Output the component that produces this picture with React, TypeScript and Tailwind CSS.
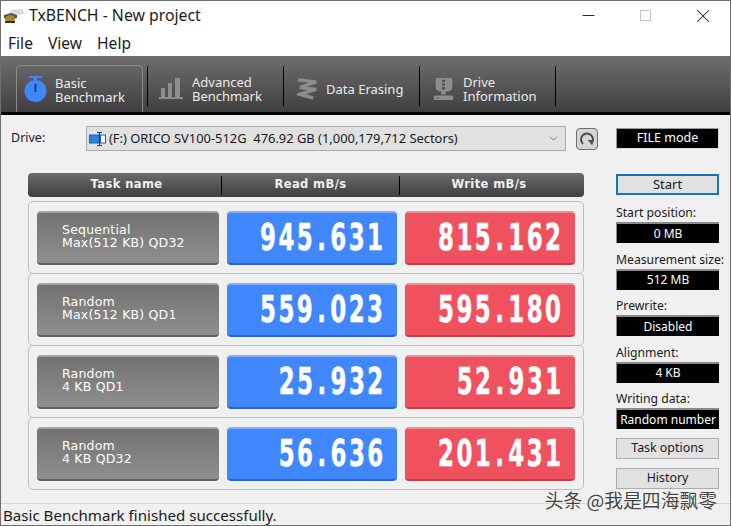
import { ChevronDown, Minus, X } from "lucide-react";

const uiFont = "font-['Noto_Sans','Open_Sans',sans-serif]";
const cellFont = "font-['DejaVu_Sans',sans-serif]";

type ResultRow = {
  line1: string;
  line2: string;
  read: string;
  write: string;
};

const results: ResultRow[] = [
  { line1: "Sequential", line2: "Max(512 KB) QD32", read: "945.631", write: "815.162" },
  { line1: "Random", line2: "Max(512 KB) QD1", read: "559.023", write: "595.180" },
  { line1: "Random", line2: "4 KB QD1", read: "25.932", write: "52.931" },
  { line1: "Random", line2: "4 KB QD32", read: "56.636", write: "201.431" },
];

const settings = [
  { label: "Start position:", value: "0 MB" },
  { label: "Measurement size:", value: "512 MB" },
  { label: "Prewrite:", value: "Disabled" },
  { label: "Alignment:", value: "4 KB" },
  { label: "Writing data:", value: "Random number" },
];

function TimerIcon() {
  return (
    <svg width="23" height="26" viewBox="0 0 23 26">
      <rect x="5" y="0" width="13" height="2" fill="#3f87ff" />
      <rect x="10" y="2" width="3" height="3" fill="#3f87ff" />
      <circle cx="11.5" cy="15" r="11" fill="#3f87ff" />
      <rect x="10.5" y="8" width="2" height="8" fill="#1f3f70" />
    </svg>
  );
}

function BarsIcon() {
  return (
    <svg width="24" height="21" viewBox="0 0 24 21" fill="#8d8d8d">
      <rect x="2" y="10" width="4" height="9" />
      <rect x="9" y="5" width="4" height="14" />
      <rect x="16" y="0" width="5" height="19" />
      <rect x="0" y="19" width="24" height="2" />
    </svg>
  );
}

function SpringIcon() {
  return (
    <svg width="21" height="23" viewBox="0 0 22 24" fill="none" stroke="#8d8d8d" strokeWidth="3.5">
      <path d="M1 3 L20 5 L3 11 L20 13 L3 18 L17 22" />
    </svg>
  );
}

function DriveIcon() {
  return (
    <svg width="22" height="24" viewBox="0 0 22 26" fill="#8d8d8d">
      <path d="M3 1 H18 Q20 1 20 3 V11 Q20 15 13 16 V19 H8 V16 Q2 15 2 11 V3 Q2 1 3 1 Z" />
      <rect x="9" y="3" width="3" height="2.5" fill="#4e4e4e" />
      <rect x="9" y="7" width="3" height="2.5" fill="#4e4e4e" />
      <rect x="9" y="11" width="3" height="2.5" fill="#4e4e4e" />
      <rect x="0" y="20" width="21" height="5" rx="1.5" />
      <rect x="3" y="22" width="2" height="1.5" fill="#4e4e4e" />
    </svg>
  );
}

function AppIcon() {
  return (
    <svg width="20" height="16" viewBox="0 0 20 16">
      <path d="M6 2 L19 1 L20 6 L7 8 Z" fill="#d8d8d8" />
      <path d="M0 7 L7 5 L13 7 L13 10 L7 12 L0 10 Z" fill="#55524a" />
      <ellipse cx="6" cy="11" rx="5" ry="4" fill="#a58a26" />
      <rect x="1" y="13" width="10" height="2" fill="#33312c" />
    </svg>
  );
}

function DiskIcon() {
  return (
    <svg width="17" height="14" viewBox="0 0 17 14">
      <rect x="0.5" y="3" width="10" height="8" fill="#2f7fe0" stroke="#1d5fb5" />
      <rect x="11.5" y="3" width="5" height="8" fill="#fff" stroke="#1d5fb5" />
      <path d="M8 0.5 H13 M10.5 0.5 V13.5 M8 13.5 H13" stroke="#20406f" strokeWidth="1" fill="none" />
    </svg>
  );
}

function RefreshIcon() {
  return (
    <svg width="16" height="16" viewBox="0 0 16 16" fill="none">
      <path d="M4 13 A6 6 0 1 1 12 13" stroke="#4a4a4a" strokeWidth="2" />
      <path d="M8.5 9 H13.5 V14 Z" fill="#4a4a4a" />
    </svg>
  );
}

const tabs = [
  {
    icon: <TimerIcon />,
    lines: ["Basic", "Benchmark"],
    active: true,
    itemClass: "w-[132px]",
    iconClass: "w-[38px] pl-[7px]",
  },
  {
    icon: <BarsIcon />,
    lines: ["Advanced", "Benchmark"],
    active: false,
    itemClass: "w-[136px]",
    iconClass: "w-[44px] pl-[11px]",
  },
  {
    icon: <SpringIcon />,
    lines: ["Data Erasing"],
    active: false,
    itemClass: "w-[136px]",
    iconClass: "w-[42px] pl-[13px]",
  },
  {
    icon: <DriveIcon />,
    lines: ["Drive", "Information"],
    active: false,
    itemClass: "w-[136px]",
    iconClass: "w-[43px] pl-[13px]",
  },
];

function Toolbar() {
  return (
    <div className="flex h-[59px] shrink-0 items-end border-b-[3px] border-black bg-gradient-to-b from-[#6f6f6f] to-[#404040] pl-[15px]">
      {tabs.map((tab) => (
        <div key={tab.lines.join()} className={`flex h-[47px] items-start justify-between ${tab.itemClass}`}>
          <div
            className={[
              "flex h-[47px] w-[127px] items-center",
              tab.active
                ? "rounded-t-[5px] border-x border-t border-[#8a8a8a] bg-gradient-to-b from-[#666666] to-[#3e3e3e]"
                : "",
            ].join(" ")}
          >
            <div className={`flex shrink-0 ${tab.iconClass}`}>{tab.icon}</div>
            <div className={`pt-px text-[13px] leading-[14px] whitespace-nowrap text-[#ececec] ${uiFont}`}>
              {tab.lines.map((line) => (
                <div key={line}>{line}</div>
              ))}
            </div>
          </div>
          <div className="mt-px h-[40px] w-px bg-black" />
        </div>
      ))}
    </div>
  );
}

function ValueCell({ value, tone }: { value: string; tone: "read" | "write" }) {
  const [whole, fraction] = value.split(".");

  return (
    <div
      className={[
        "flex h-[54px] w-[170px] items-center justify-end rounded-[4px] border-t-2 border-b-2 pr-[11px]",
        tone === "read"
          ? "border-t-[#7fb0ff] border-b-[#2a68c8] bg-[#3f87fb]"
          : "border-t-[#f58a94] border-b-[#c73c48] bg-[#f0515f]",
      ].join(" ")}
    >
      <span className="inline-block origin-right scale-x-[0.62] whitespace-nowrap font-['DejaVu_Sans',sans-serif] text-[37px] leading-none font-bold tracking-[4px] text-white [-webkit-text-stroke:0.5px_white]">
        {whole}
        <span className="mx-[3px]">.</span>
        {fraction}
      </span>
    </div>
  );
}

function ResultCard({ row }: { row: ResultRow }) {
  return (
    <div className="-mt-px flex h-[73px] items-center gap-[8px] rounded-[5px] border border-[#bdbdbd] pl-[8px]">
      <div
        className={`flex h-[54px] w-[182px] flex-col justify-center rounded-[4px] border-t-2 border-b-2 border-t-[#a5a5a5] border-b-[#5f5f5f] bg-gradient-to-b from-[#727272] to-[#8f8f8f] pb-[4px] pl-[25px] text-[12.5px] font-medium leading-[13px] tracking-[0.2px] text-white ${cellFont}`}
      >
        <div>{row.line1}</div>
        <div>{row.line2}</div>
      </div>
      <ValueCell value={row.read} tone="read" />
      <ValueCell value={row.write} tone="write" />
    </div>
  );
}

function SideButton({ label }: { label: string }) {
  return (
    <button
      type="button"
      className={`h-[21px] w-[103px] border border-[#adadad] bg-[#e1e1e1] text-[12.4px] leading-none text-[#1a1a1a] ${uiFont}`}
    >
      {label}
    </button>
  );
}

export default function App() {
  return (
    <div className={`relative flex h-[526px] w-[731px] flex-col overflow-hidden border border-[#6f6f6f] bg-[#f0f0f0] ${uiFont}`}>
      <div className="flex h-[55px] shrink-0 flex-col bg-white">
        <div className="flex h-[29px] shrink-0 items-center pl-[3px]">
          <AppIcon />
          <span className="ml-[5px] text-[15.8px] text-[#1a1a1a]">TxBENCH - New project</span>
          <div className="ml-auto flex items-center text-[#222]">
            <Minus size={19} strokeWidth={1.2} className="mr-[42px]" />
            <div className="mr-[41px] h-[11px] w-[11px] border border-[#c4c4c4]" />
            <X size={22} strokeWidth={1.1} className="mr-[16px]" />
          </div>
        </div>
        <div className="flex gap-[15px] pl-[7px] text-[15.6px] leading-[26px] text-[#1a1a1a]">
          <span>File</span>
          <span>View</span>
          <span>Help</span>
        </div>
      </div>

      <Toolbar />

      <div className="flex min-h-0 flex-1 flex-col">
        <div className="mt-[11px] flex items-center pl-[10px]">
          <span className="w-[75px] text-[12.5px] text-[#1a1a1a]">Drive:</span>
          <div className="flex h-[25px] w-[480px] items-center border border-[#adadad] bg-[#e1e1e1] pl-[2px] text-[12.9px] text-[#1a1a1a]">
            <DiskIcon />
            <span className="ml-[3px] whitespace-pre">(F:) ORICO SV100-512G  476.92 GB (1,000,179,712 Sectors)</span>
            <ChevronDown size={13} strokeWidth={1.25} className="ml-auto mr-[5px] text-[#555]" />
          </div>
          <div className="ml-[10px] flex h-[22px] w-[22px] items-center justify-center rounded-[4px] border border-[#6e6e6e] bg-[#d5d5d5]">
            <RefreshIcon />
          </div>
          <div className="ml-[18px] flex h-[21px] w-[103px] items-center justify-center border border-[#9a9a9a] border-r-[#e0e0e0] border-b-[#e0e0e0] bg-black text-[12.5px] text-white">
            FILE mode
          </div>
        </div>

        <div className="mt-[22px] flex">
          <div className="ml-[27px] w-[556px]">
            <div className={`mb-[5px] flex h-[24px] items-center rounded-[4px] bg-gradient-to-b from-[#6c6c6c] to-[#3f3f3f] text-[11.5px] font-bold tracking-[0.4px] text-[#f0f0f0] ${cellFont}`}>
              <div className="w-[193px] pl-[4px] text-center">Task name</div>
              <div className="h-[19px] border-l border-black" />
              <div className="w-[177px] text-center">Read mB/s</div>
              <div className="h-[19px] border-l border-black" />
              <div className="flex-1 pr-[6px] text-center">Write mB/s</div>
            </div>
            {results.map((row) => (
              <ResultCard key={row.line2} row={row} />
            ))}
          </div>

          <div className="mt-px ml-[32px] flex w-[104px] flex-col">
            <button
              type="button"
              className="h-[21px] w-[103px] border-2 border-[#1a74b8] bg-[#e1e1e1] text-[13px] leading-none text-[#1a1a1a]"
            >
              Start
            </button>
            {settings.map((item, index) => (
              <div key={item.label} className={index === 0 ? "mt-[9px]" : "mt-[7.5px]"}>
                <div className="text-[12.2px] leading-[18px] whitespace-nowrap text-[#1a1a1a]">{item.label}</div>
                <div className="flex h-[21px] w-[103px] items-center justify-center border-t-2 border-l border-[#8a8a8a] bg-black text-[12px] whitespace-nowrap text-white">
                  {item.value}
                </div>
              </div>
            ))}
            <div className="mt-[9px] flex flex-col gap-[9px]">
              <SideButton label="Task options" />
              <SideButton label="History" />
            </div>
          </div>
        </div>

        <div className="mt-auto flex h-[22px] items-center border-t border-[#d7d7d7] pt-px pl-[2px] text-[15.1px] text-[#1a1a1a]">
          Basic Benchmark finished successfully.
        </div>
      </div>

      <div className="absolute right-[13px] bottom-[15px] font-['Noto_Sans_CJK_SC',sans-serif] text-[18.8px] leading-none text-[#444] [text-shadow:0_0_2px_#fff,0_0_1px_#fff]">
        头条 @我是四海飘零
      </div>
    </div>
  );
}
